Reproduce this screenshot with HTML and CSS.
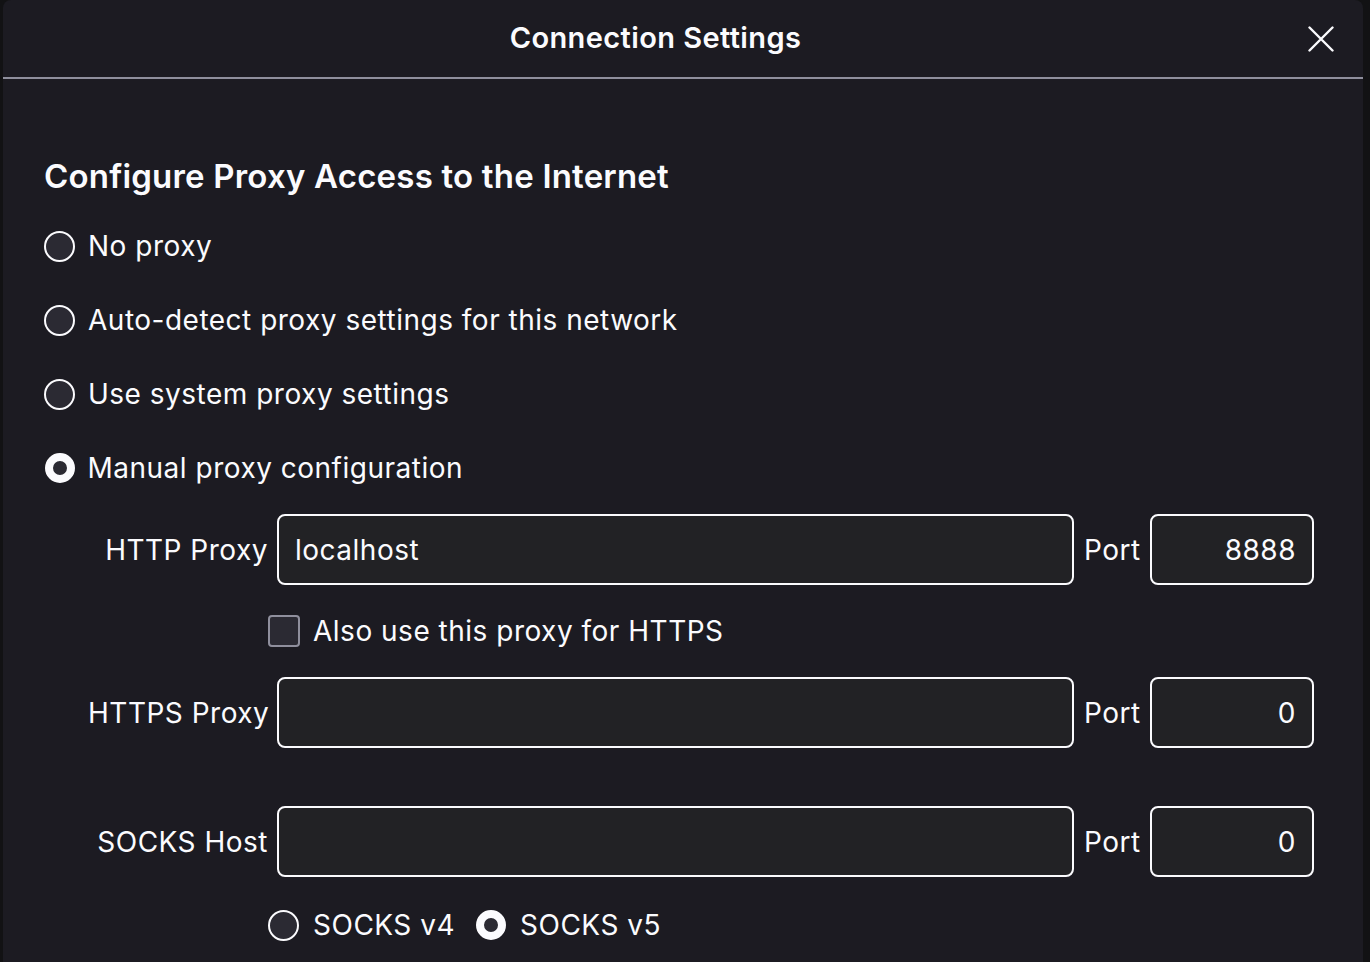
FILE: index.html
```html
<!DOCTYPE html>
<html lang="en">
<head>
<meta charset="utf-8">
<title>Connection Settings</title>
<link rel="stylesheet" href="styles.css">
</head>
<body>
<div class="dialog">
  <div class="header">
    <div class="title">Connection Settings</div>
    <button class="close" aria-label="Close">
      <svg width="26" height="26" viewBox="0 0 26 26"><path d="M1.5 1.5 L24.5 24.5 M24.5 1.5 L1.5 24.5" stroke="#fbfbfe" stroke-width="2.4" stroke-linecap="round" fill="none"/></svg>
    </button>
  </div>
  <div class="content">
    <h1 class="heading">Configure Proxy Access to the Internet</h1>
    <div class="radio-row"><span class="radio"></span><span class="label">No proxy</span></div>
    <div class="radio-row"><span class="radio"></span><span class="label">Auto-detect proxy settings for this network</span></div>
    <div class="radio-row"><span class="radio"></span><span class="label">Use system proxy settings</span></div>
    <div class="radio-row"><span class="radio checked"></span><span class="label">Manual proxy configuration</span></div>

    <div class="manual">
      <div class="field-row first">
        <span class="field-label">HTTP Proxy</span>
        <div class="input host">localhost</div>
        <span class="port-label">Port</span>
        <div class="input port">8888</div>
      </div>
      <div class="check-row">
        <span class="checkbox"></span><span class="label">Also use this proxy for HTTPS</span>
      </div>
      <div class="field-row">
        <span class="field-label">HTTPS Proxy</span>
        <div class="input host"></div>
        <span class="port-label">Port</span>
        <div class="input port">0</div>
      </div>
      <div class="field-row socks">
        <span class="field-label">SOCKS Host</span>
        <div class="input host"></div>
        <span class="port-label">Port</span>
        <div class="input port">0</div>
      </div>
      <div class="socks-row">
        <span class="radio"></span><span class="label">SOCKS v4</span>
        <span class="radio checked v5"></span><span class="label">SOCKS v5</span>
      </div>
    </div>
  </div>
</div>
</body>
</html>
```

FILE: styles.css
```css
* { box-sizing: border-box; }
html, body { margin: 0; padding: 0; }
body {
  background: #121214;
  height: 962px;
  overflow: hidden;
  font-family: Inter, "Noto Sans", sans-serif;
  color: #fbfbfe;
}
.dialog {
  margin-left: 3px;
  width: 1360px;
  height: 980px;
  background: #1c1b22;
  border-radius: 8px 8px 0 0;
}
.header {
  height: 79px;
  border-bottom: 2px solid #8f8f9d;
  display: flex;
  align-items: center;
}
.title {
  flex: 1;
  text-align: center;
  font-size: 29px;
  letter-spacing: 0.4px;
  font-weight: 600;
  margin-top: -2px;
}
.close {
  width: 26px;
  height: 26px;
  padding: 0;
  border: 0;
  background: none;
  margin-right: 29px;
  display: flex;
}
.content {
  padding: 77px 0 0 41px;
}
.heading {
  margin: 0 0 13px 0;
  font-size: 33px;
  letter-spacing: 0.2px;
  font-weight: 600;
  line-height: 40px;
}
.radio-row {
  height: 74px;
  display: flex;
  align-items: center;
}
.radio {
  width: 31px;
  height: 31px;
  border-radius: 50%;
  border: 2px solid #fbfbfe;
  background: #2b2a33;
  flex: none;
}
.radio.checked {
  border-width: 8px;
  width: 30px;
  height: 30px;
  margin-left: 0.5px;
}
.label, .field-label, .port-label, .input {
  font-size: 28px;
  letter-spacing: 0.5px;
}
.label {
  line-height: 34px;
  margin-left: 13px;
}
.manual {
  padding-left: 44px;
}
.field-row {
  display: flex;
  align-items: center;
  gap: 9px;
  margin-top: 30px;
}
.field-row.first { margin-top: 9px; }
.field-row.socks { margin-top: 58px; }
.field-label {
  width: 180px;
  text-align: right;
  white-space: nowrap;
}
.port-label {
  width: 58px;
  padding-left: 1px;
}
.input {
  height: 71px;
  border: 2px solid #fbfbfe;
  border-radius: 8px;
  background: #222225;
  display: flex;
  align-items: center;
}
.input.host {
  width: 797px;
  padding-left: 16px;
}
.input.port {
  width: 164px;
  justify-content: flex-end;
  padding-right: 16px;
}
.check-row {
  display: flex;
  align-items: center;
  margin-top: 30px;
  margin-left: 180px;
  height: 32px;
}
.checkbox {
  width: 32px;
  height: 32px;
  border: 2px solid #8f8f9d;
  border-radius: 4px;
  background: #2b2a33;
  flex: none;
}
.check-row .label { margin-left: 13px; }
.socks-row {
  display: flex;
  align-items: center;
  margin-left: 180px;
  margin-top: 32px;
  height: 32px;
}
.socks-row .label { margin-left: 14px; }
.radio.v5 { margin-left: 21px; }
```
